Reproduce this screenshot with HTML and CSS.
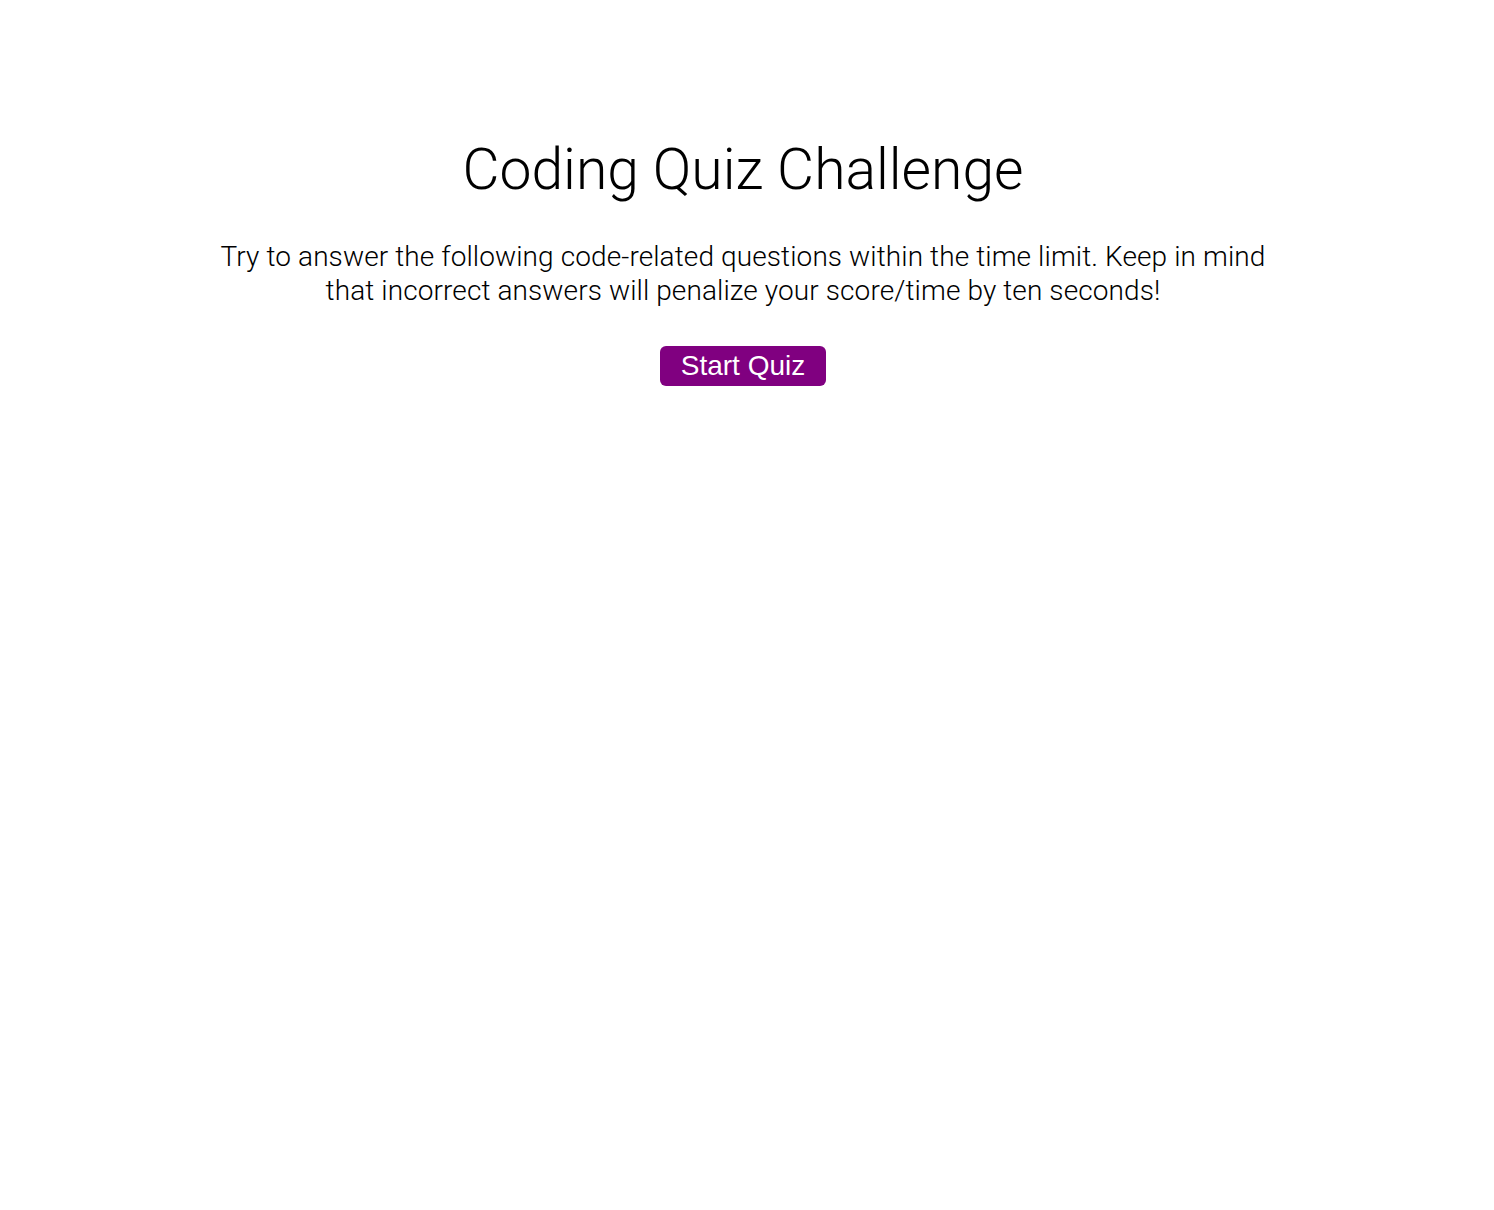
FILE: index.html
```html
<!DOCTYPE html>
<html lang="en">
<head>
<meta charset="utf-8">
<title>Coding Quiz Challenge</title>
<link rel="stylesheet" href="styles.css">
</head>
<body>
<main class="intro">
  <h1 class="title">Coding Quiz Challenge</h1>
  <p class="lead">Try to answer the following code-related questions within the time limit. Keep in mind that incorrect answers will penalize your score/time by ten seconds!</p>
  <button class="start-btn" type="button">Start Quiz</button>
</main>
</body>
</html>
```
FILE: styles.css
```css
html, body {
  margin: 0;
  padding: 0;
  background: #fff;
}
body {
  font-family: Roboto, "Liberation Sans", sans-serif;
  font-weight: 300;
  color: #000;
}
.intro {
  display: flex;
  flex-direction: column;
  align-items: center;
  padding: 130px 8px 0 0;
  text-align: center;
}
.title {
  margin: 0;
  font-size: 57px;
  font-weight: 300;
  line-height: 80px;
}
.lead {
  margin: 30px 0 0;
  width: 1070px;
  font-size: 28px;
  font-weight: 300;
  letter-spacing: 0.1px;
  line-height: 34px;
}
.start-btn {
  margin-top: 38px;
  background: #800080;
  color: #fff;
  border: none;
  border-radius: 6px;
  font-family: "Liberation Sans", Arial, sans-serif;
  font-size: 28px;
  font-weight: 400;
  padding: 0 21px;
  height: 40px;
  line-height: 40px;
}
```
